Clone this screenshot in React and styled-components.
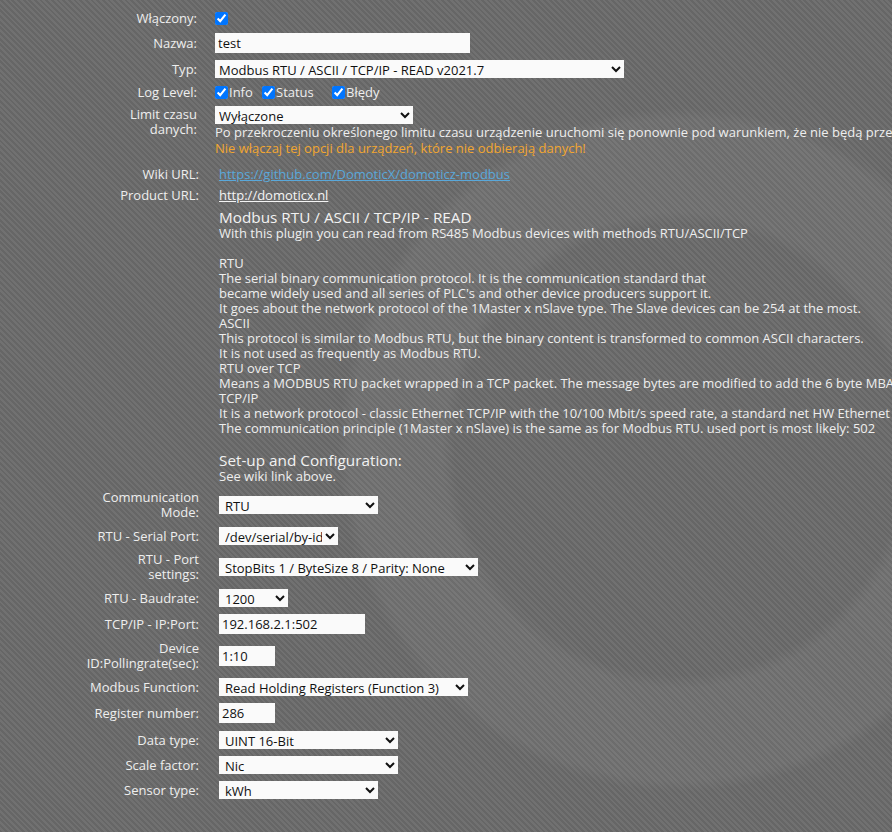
import styled, { createGlobalStyle } from "styled-components";

const GlobalStyle = createGlobalStyle`
  html, body {
    margin: 0;
    overflow: hidden;
  }
  body {
    min-height: 832px;
    background-color: #6b6b6b;
    background-image:
      radial-gradient(circle at 680px 450px, rgba(255,255,255,0) 0 225px, rgba(255,255,255,0.045) 238px 330px, rgba(255,255,255,0) 342px),
      repeating-linear-gradient(45deg, #666666 0 2px, #717171 2px 4px);
    font-family: "Open Sans", "Noto Sans", sans-serif;
    font-size: 13px;
    color: #eeeeee;
  }
`

const Page = styled.div`
    display: flex;
    flex-direction: column;
    padding-top: 10px;
    width: 892px;
`

const Row = styled.div`
    display: grid;
    grid-template-columns: ${p => p.$wide ? "199px" : "197px"} auto;
    column-gap: ${p => p.$wide ? "20px" : "18px"};
    align-items: ${p => p.$top ? "start" : "center"};
    min-height: 16px;
    margin-top: ${p => p.$mt ?? 7}px;
`

const Label = styled.div`
    text-align: right;
    white-space: nowrap;
    line-height: 15px;
    padding-top: ${p => p.$pt || 0}px;
`

const Value = styled.div`
    display: flex;
    flex-direction: column;
    align-items: flex-start;
    white-space: nowrap;
`

const Check = styled.input.attrs({ type: "checkbox" })`
    width: 13px;
    height: 13px;
    margin: 0;
    accent-color: #0075ff;
`

const CheckGroup = styled.div`
    display: flex;
    align-items: center;
`

const CheckItem = styled.label`
    display: flex;
    align-items: center;
    gap: 1px;
    width: ${p => p.$w}px;
    line-height: 15px;
`

const TextInput = styled.input.attrs({ type: "text" })`
    box-sizing: border-box;
    width: ${p => p.$w}px;
    height: 20px;
    border: none;
    border-radius: 0;
    padding: 0 3px;
    background: #fafafa;
    font-family: inherit;
    font-size: 13px;
    color: #111;
    outline: none;
`

const Select = styled.select`
    box-sizing: border-box;
    width: ${p => p.$w}px;
    height: 18px;
    border: none;
    border-radius: 0;
    padding: 0 0 0 ${p => p.$pl ?? 0}px;
    background: #fafafa;
    font-family: inherit;
    font-size: 13px;
    color: #111;
    outline: none;
`

const Note = styled.div`
    line-height: 16px;
    color: ${p => p.$warn ? "#f2a630" : "#eeeeee"};
`

const Link = styled.a`
    line-height: 16px;
    color: ${p => p.$blue ? "#5aa8da" : "#f4f4f4"};
    text-decoration: underline;
`

const Title = styled.div`
    font-size: 15.3px;
    line-height: ${p => p.$lh || 17}px;
    color: #f2f2f2;
`

const Line = styled.div`
    line-height: 15px;
    min-height: 15px;
`

const descLines = [
    "With this plugin you can read from RS485 Modbus devices with methods RTU/ASCII/TCP",
    "",
    "RTU",
    "The serial binary communication protocol. It is the communication standard that",
    "became widely used and all series of PLC's and other device producers support it.",
    "It goes about the network protocol of the 1Master x nSlave type. The Slave devices can be 254 at the most.",
    "ASCII",
    "This protocol is similar to Modbus RTU, but the binary content is transformed to common ASCII characters.",
    "It is not used as frequently as Modbus RTU.",
    "RTU over TCP",
    "Means a MODBUS RTU packet wrapped in a TCP packet. The message bytes are modified to add the 6 byte MBAP header.",
    "TCP/IP",
    "It is a network protocol - classic Ethernet TCP/IP with the 10/100 Mbit/s speed rate, a standard net HW Ethernet card.",
    "The communication principle (1Master x nSlave) is the same as for Modbus RTU. used port is most likely: 502",
    "",
]

export default function App() {
    return (
        <>
            <GlobalStyle />
            <Page>
                <Row $mt={0}>
                    <Label>Włączony:</Label>
                    <Value><Check defaultChecked /></Value>
                </Row>
                <Row>
                    <Label>Nazwa:</Label>
                    <Value><TextInput $w={255} defaultValue="test" /></Value>
                </Row>
                <Row>
                    <Label>Typ:</Label>
                    <Value>
                        <Select $w={409} defaultValue="modbus">
                            <option value="modbus">Modbus RTU / ASCII / TCP/IP - READ v2021.7</option>
                        </Select>
                    </Value>
                </Row>
                <Row $mt={6}>
                    <Label>Log Level:</Label>
                    <CheckGroup>
                        <CheckItem $w={47}><Check defaultChecked />Info</CheckItem>
                        <CheckItem $w={70}><Check defaultChecked />Status</CheckItem>
                        <CheckItem $w={60}><Check defaultChecked />Błędy</CheckItem>
                    </CheckGroup>
                </Row>
                <Row $mt={6} $top>
                    <Label $pt={1}>Limit czasu<br />danych:</Label>
                    <Value>
                        <Select $w={198} defaultValue="off">
                            <option value="off">Wyłączone</option>
                        </Select>
                        <Note>Po przekroczeniu określonego limitu czasu urządzenie uruchomi się ponownie pod warunkiem, że nie będą przesyłane żadne dane.</Note>
                        <Note $warn>Nie włączaj tej opcji dla urządzeń, które nie odbierają danych!</Note>
                    </Value>
                </Row>
                <Row $mt={10} $wide>
                    <Label>Wiki URL:</Label>
                    <Value><Link $blue href="#">https://github.com/DomoticX/domoticz-modbus</Link></Value>
                </Row>
                <Row $mt={5} $wide>
                    <Label>Product URL:</Label>
                    <Value><Link href="#">http://domoticx.nl</Link></Value>
                </Row>
                <Row $mt={6} $wide $top>
                    <Label />
                    <Value>
                        <Title>Modbus RTU / ASCII / TCP/IP - READ</Title>
                        {descLines.map((l, i) => <Line key={i}>{l}</Line>)}
                        <Title $lh={18}>Set-up and Configuration:</Title>
                        <Line>See wiki link above.</Line>
                    </Value>
                </Row>
                <Row $mt={6} $wide>
                    <Label>Communication<br />Mode:</Label>
                    <Value>
                        <Select $w={159} $pl={2}><option>RTU</option></Select>
                    </Value>
                </Row>
                <Row $wide>
                    <Label>RTU - Serial Port:</Label>
                    <Value>
                        <Select $w={119} $pl={2}><option>/dev/serial/by-id/usb-FTDI</option></Select>
                    </Value>
                </Row>
                <Row $wide>
                    <Label>RTU - Port<br />settings:</Label>
                    <Value>
                        <Select $w={259} $pl={2}><option>StopBits 1 / ByteSize 8 / Parity: None</option></Select>
                    </Value>
                </Row>
                <Row $wide>
                    <Label>RTU - Baudrate:</Label>
                    <Value>
                        <Select $w={69} $pl={2}><option>1200</option></Select>
                    </Value>
                </Row>
                <Row $wide>
                    <Label>TCP/IP - IP:Port:</Label>
                    <Value><TextInput $w={146} defaultValue="192.168.2.1:502" /></Value>
                </Row>
                <Row $wide>
                    <Label>Device<br />ID:Pollingrate(sec):</Label>
                    <Value><TextInput $w={56} defaultValue="1:10" /></Value>
                </Row>
                <Row $wide>
                    <Label>Modbus Function:</Label>
                    <Value>
                        <Select $w={249} $pl={2}><option>Read Holding Registers (Function 3)</option></Select>
                    </Value>
                </Row>
                <Row $wide>
                    <Label>Register number:</Label>
                    <Value><TextInput $w={56} defaultValue="286" /></Value>
                </Row>
                <Row $mt={8} $wide>
                    <Label>Data type:</Label>
                    <Value>
                        <Select $w={179} $pl={2}><option>UINT 16-Bit</option></Select>
                    </Value>
                </Row>
                <Row $wide>
                    <Label>Scale factor:</Label>
                    <Value>
                        <Select $w={179} $pl={2}><option>Nic</option></Select>
                    </Value>
                </Row>
                <Row $wide>
                    <Label>Sensor type:</Label>
                    <Value>
                        <Select $w={159} $pl={2}><option>kWh</option></Select>
                    </Value>
                </Row>
            </Page>
        </>
    );
}
